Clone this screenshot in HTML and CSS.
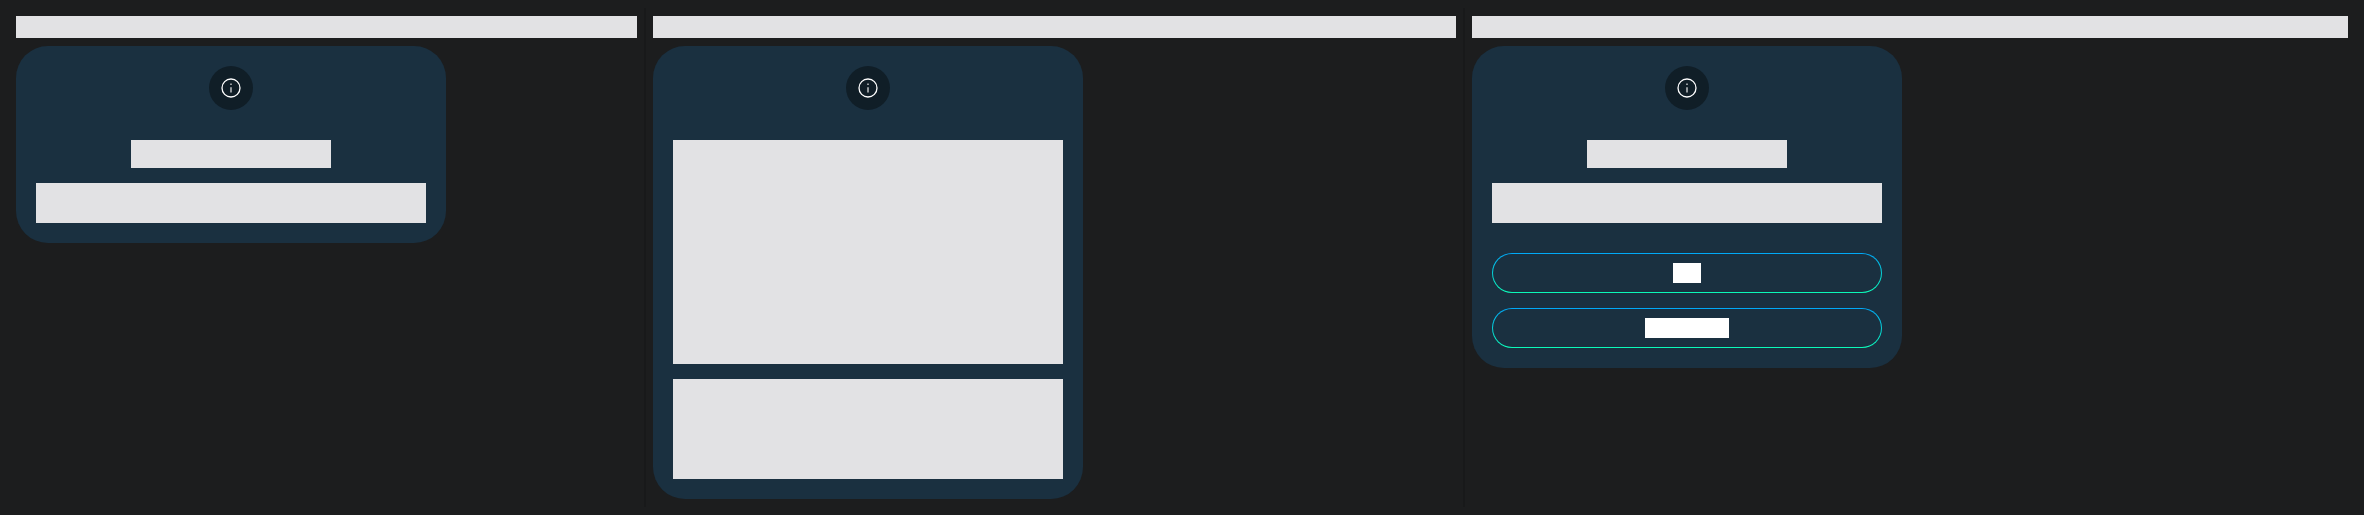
FILE: index.html
```html
<!DOCTYPE html>
<html lang="en">
<head>
<meta charset="utf-8">
<title>Information cards</title>
<link rel="stylesheet" href="styles.css">
</head>
<body>
<svg class="defs" aria-hidden="true">
  <symbol id="info" viewBox="0 0 24 24">
    <circle cx="12" cy="12" r="9" fill="none" stroke="#fff" stroke-width="1.3"/>
    <path d="M12 11.2V16.5M12 7.5V9" fill="none" stroke="#fff" stroke-width="1.1"/>
  </symbol>
</svg>
<main class="gallery">
  <section class="variant">
    <div class="caption"></div>
    <article class="card">
      <div class="badge"><svg class="icon"><use href="#info"/></svg></div>
      <div class="title"></div>
      <div class="text"></div>
    </article>
  </section>
  <section class="variant">
    <div class="caption"></div>
    <article class="card">
      <div class="badge"><svg class="icon"><use href="#info"/></svg></div>
      <div class="title title-long"></div>
      <div class="text text-long"></div>
    </article>
  </section>
  <section class="variant">
    <div class="caption"></div>
    <article class="card">
      <div class="badge"><svg class="icon"><use href="#info"/></svg></div>
      <div class="title"></div>
      <div class="text"></div>
      <div class="actions">
        <button class="action" type="button" aria-label="Confirm"><span class="label"></span></button>
        <button class="action" type="button" aria-label="Dismiss"><span class="label label-wide"></span></button>
      </div>
    </article>
  </section>
</main>
</body>
</html>
```
FILE: styles.css
```css
* {
  box-sizing: border-box;
}

body {
  margin: 0;
  padding: 8px;
  min-height: 100vh;
  display: flex;
  background: #1c1d1e;
  font-family: Roboto, sans-serif;
}

.defs {
  position: absolute;
  width: 0;
  height: 0;
}

.gallery {
  flex: 1;
  display: grid;
  grid-template-columns: 637fr 819fr 892fr;
}

.variant {
  min-width: 0;
  padding: 8px 7px;
  border: solid #18191a;
  border-width: 0 1px;
}

.variant:first-child {
  border-left-color: transparent;
}

.variant:last-child {
  border-right-color: transparent;
}

.caption {
  height: 22px;
  margin-bottom: 8px;
  background: #e2e2e4;
}

.card {
  width: 430px;
  max-width: 100%;
  padding: 20px;
  border-radius: 32px;
  background: #1a3040;
  display: flex;
  flex-direction: column;
  align-items: center;
}

.badge {
  width: 44px;
  height: 44px;
  margin-bottom: 30px;
  border-radius: 50%;
  background: #101e27;
  display: grid;
  place-items: center;
}

.icon {
  width: 24px;
  height: 24px;
}

.title {
  width: 200px;
  height: 28px;
  margin-bottom: 15px;
  background: #e2e2e4;
}

.title-long {
  width: 100%;
  height: 224px;
}

.text {
  width: 100%;
  height: 40px;
  background: #e2e2e4;
}

.text-long {
  height: 100px;
}

.actions {
  width: 100%;
  margin-top: 30px;
  display: grid;
  gap: 15px;
}

.action {
  height: 40px;
  padding: 0;
  border: 1px solid transparent;
  border-radius: 20px;
  background:
    linear-gradient(#1a3040, #1a3040) padding-box,
    linear-gradient(#00a8f8, #0cfab8) border-box;
  display: grid;
  place-items: center;
}

.label {
  width: 28px;
  height: 20px;
  background: #fff;
}

.label-wide {
  width: 84px;
}
```
